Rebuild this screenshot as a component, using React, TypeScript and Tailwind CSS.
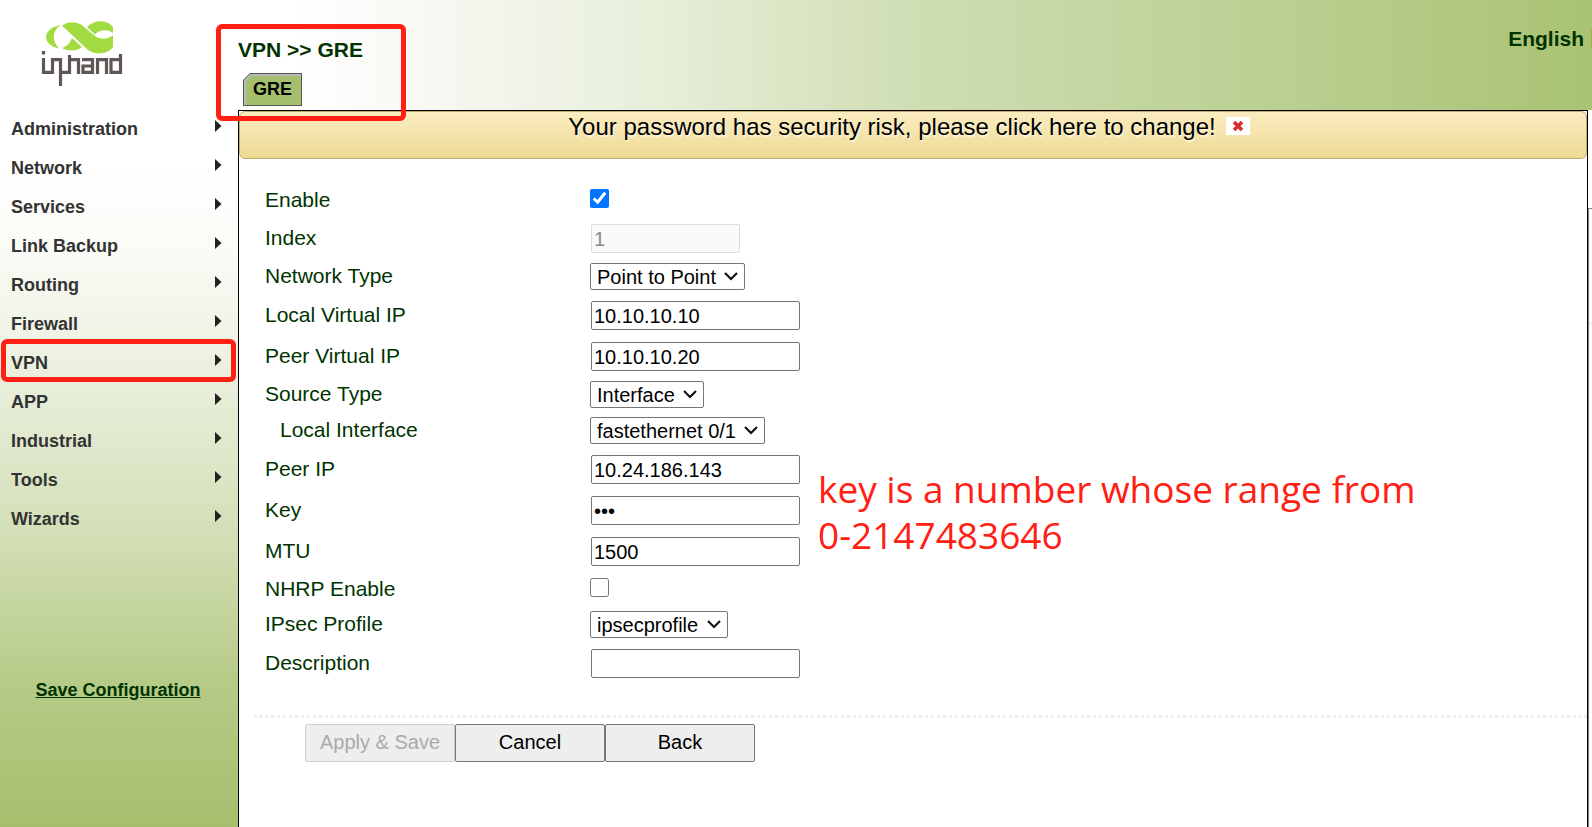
import { useState } from "react";
import type { ReactNode } from "react";

const menuItems = [
  "Administration",
  "Network",
  "Services",
  "Link Backup",
  "Routing",
  "Firewall",
  "VPN",
  "APP",
  "Industrial",
  "Tools",
  "Wizards",
];

const inputClass =
  "mx-px h-[29px] rounded-xs border border-[#767676] bg-white px-0.5 text-[20px] text-black";

const Logo = () => (
  <svg viewBox="0 0 84 68" className="h-[68px] w-[84px]" role="img" aria-label="inhand">
    <g fill="#a2dc40">
      <path d="M20 5 C11 7 6 12 6 17 C6 22 11 27 19 28.5 C12 21 12 12 20 5 Z" />
      <path d="M22 6 C27 1 37 1 43 6 L55 16 C61 20 68 19 73 15.500 L73 27 C67 35 55 35 48 30 L32 15 C29 12 26 9 22 6 Z" />
      <path d="M47 7 C54 0 66 -1 73 7 L73 13 C66 8 58 11 55 14.500 Z" />
      <path d="M32 18 L42 27 C36 32 27 31 22 28 C27 26.500 30 23 32 18 Z" />
    </g>
    <g fill="none" stroke="#5f5655" strokeWidth="3.200">
      <path d="M3.500 38 V52.400 H12" />
      <path d="M3.500 31 V34.500" />
      <path d="M12.500 54 V39.600 H20.500 V66" />
      <path d="M20.500 52.400 H29.500 V35" />
      <path d="M29.500 39.600 H38.500 V54" />
      <path d="M42 39.600 H52.500 V52.400 H43 V46 H52.500" />
      <path d="M57.500 54 V39.600 H66.500 V54" />
      <path d="M80.500 34 V52.400 H71 V39.600 H80.500" />
    </g>
  </svg>
);

const Arrow = () => (
  <svg viewBox="0 0 7 12" className="mb-2 h-3 w-[7px]" aria-hidden="true">
    <path d="M0 0 L6.500 6 L0 12 Z" fill="#222" />
  </svg>
);

type RowProps = {
  label: string;
  id: string;
  indent?: boolean;
  children: ReactNode;
};

const Row = ({ label, id, indent, children }: RowProps) => (
  <div className="flex min-h-[35px] items-center">
    <label htmlFor={id} className={indent ? "w-[325px] shrink-0 pb-0.5 pl-[15px]" : "w-[325px] shrink-0 pb-0.5"}>
      {label}
    </label>
    {children}
  </div>
);

type TextRowProps = {
  label: string;
  id: string;
  value?: string;
  type?: string;
};

const TextRow = ({ label, id, value = "", type = "text" }: TextRowProps) => (
  <Row label={label} id={id}>
    <div className="flex py-1.5">
      <input id={id} type={type} defaultValue={value} className={`${inputClass} w-[209px]`} />
    </div>
  </Row>
);

type SelectRowProps = {
  label: string;
  id: string;
  option: string;
  width: string;
  indent?: boolean;
};

const SelectRow = ({ label, id, option, width, indent }: SelectRowProps) => (
  <Row label={label} id={id} indent={indent}>
    <div className="flex h-9 items-start pt-1">
      <div className="relative flex">
        <select
          id={id}
          className={`${width} h-[27px] appearance-none rounded-xs border border-[#767676] bg-white pl-1.5 text-[20px] leading-6 text-black`}
        >
          <option>{option}</option>
        </select>
        <svg
          viewBox="0 0 14 9"
          className="pointer-events-none absolute right-[7px] top-[9px] h-[9px] w-[14px]"
          aria-hidden="true"
        >
          <path d="M1 1 L7 7 L13 1" fill="none" stroke="#111" strokeWidth="2.200" />
        </svg>
      </div>
    </div>
  </Row>
);

const Sidebar = () => (
  <aside className="flex w-[238px] shrink-0 flex-col bg-[linear-gradient(to_bottom,#fff_20%,#fbfcf8_29%,#f0f4e6_40%,#e2ead0_52%,#d2dfb5_65%,#b7cb88_82%,#a5bf6d)]">
    <div className="pl-10 pt-5">
      <Logo />
    </div>
    <nav className="mt-[22px]">
      {menuItems.map((item) => (
        <a
          key={item}
          href="#"
          className="relative flex h-[39px] items-center justify-between pl-[11px] pr-4 text-[18px] font-bold text-[#333]"
        >
          {item}
          <Arrow />
          {item === "VPN" && (
            <span className="absolute -top-[5px] bottom-px left-px right-[2px] rounded-md border-[5px] border-[#ff2013]" />
          )}
        </a>
      ))}
    </nav>
    <a href="#" className="mt-[138px] pr-0.5 text-center text-[18px] font-bold text-[#003300] underline">
      Save Configuration
    </a>
  </aside>
);

const Header = () => (
  <header className="flex h-[110px] items-start justify-between overflow-hidden bg-[linear-gradient(to_right,#fff_4%,#f8f9f4_13%,#e8efdb_30%,#cfdeb3_50%,#c1d39b_69%,#a9c374)]">
    <div className="pt-9">
      <h1 className="text-[21px] font-bold leading-7 text-[#003300]">VPN &gt;&gt; GRE</h1>
      <button
        type="button"
        className="ml-[5px] mt-[9px] block h-[33px] w-[59px] bg-[#555] pb-px pl-px pr-px pt-px [clip-path:polygon(7px_0,100%_0,100%_100%,0_100%,0_7px)]"
      >
        <span className="block h-full bg-[#b9b9b9] pl-0.5 pt-0.5 [clip-path:polygon(6px_0,100%_0,100%_100%,0_100%,0_6px)]">
          <span className="block h-full bg-[#a5c06c] pr-0.5 text-[18px] font-bold leading-[26px] text-black [clip-path:polygon(5px_0,100%_0,100%_100%,0_100%,0_5px)]">
            GRE
          </span>
        </span>
      </button>
    </div>
    <div className="flex shrink-0 items-center gap-[7px] pt-[25px] text-[21px] font-bold leading-7 text-[#003300]">
      <a href="#">English</a>
      <span className="h-5 w-px bg-[#a3ad3c]" />
    </div>
  </header>
);

const App = () => {
  const [showNotice, setShowNotice] = useState(true);

  return (
    <div className="flex min-h-screen bg-white font-['Liberation_Sans',Arial,sans-serif]">
      <Sidebar />
      <main className="relative flex min-w-0 grow flex-col">
        <Header />
        <div className="flex grow">
          <div className="min-w-0 grow border border-b-0 border-black">
            {showNotice && (
              <div className="flex h-12 items-start justify-center gap-2.5 rounded-md border border-[#c0aa6a] bg-linear-to-b from-[#fbecc0] to-[#eedb94] pr-2 text-[24px] leading-[30px] text-black">
                <a href="#" className="text-shadow-[1px_2px_1px_#fbf5dc]">
                  Your password has security risk, please click here to change!
                </a>
                <button
                  type="button"
                  aria-label="Close"
                  onClick={() => setShowNotice(false)}
                  className="mt-[5px] flex h-[18px] w-6 items-center justify-center bg-white"
                >
                  <svg viewBox="0 0 12 12" className="size-3" aria-hidden="true">
                    <path d="M2 2 L10 10 M10 2 L2 10" stroke="#dd2a2a" strokeWidth="3.500" />
                  </svg>
                </button>
              </div>
            )}

            <form className="pt-6">
              <div className="relative pl-[26px] text-[21px] text-[#003300]">
                <Row label="Enable" id="enable">
                  <input id="enable" type="checkbox" defaultChecked className="mb-1 size-[19px]" />
                </Row>
                <Row label="Index" id="index">
                  <div className="flex py-1.5">
                    <input
                      id="index"
                      type="text"
                      defaultValue="1"
                      disabled
                      className="mx-px h-[29px] w-[149px] rounded-xs border border-[#dcdcdc] bg-[#fafafa] px-0.5 text-[20px] text-[#8a8a8a]"
                    />
                  </div>
                </Row>
                <SelectRow label="Network Type" id="network-type" option="Point to Point" width="w-[155px]" />
                <TextRow label="Local Virtual IP" id="local-virtual-ip" value="10.10.10.10" />
                <TextRow label="Peer Virtual IP" id="peer-virtual-ip" value="10.10.10.20" />
                <SelectRow label="Source Type" id="source-type" option="Interface" width="w-[114px]" />
                <SelectRow
                  label="Local Interface"
                  id="local-interface"
                  option="fastethernet 0/1"
                  width="w-[175px]"
                  indent
                />
                <TextRow label="Peer IP" id="peer-ip" value="10.24.186.143" />
                <TextRow label="Key" id="key" type="password" value="123" />
                <TextRow label="MTU" id="mtu" value="1500" />
                <Row label="NHRP Enable" id="nhrp-enable">
                  <input id="nhrp-enable" type="checkbox" className="mb-1 size-[19px]" />
                </Row>
                <SelectRow label="IPsec Profile" id="ipsec-profile" option="ipsecprofile" width="w-[138px]" />
                <TextRow label="Description" id="description" />

                {/* note beside the key field */}
                <p className="absolute left-[579px] top-[283px] w-[620px] font-['Open_Sans','Noto_Sans',sans-serif] text-[37px] leading-[46px] text-[#ff2013]">
                  key is a number whose range from 0-2147483646
                </p>
              </div>

              <div className="ml-[15px] mt-[31px] border-t-[3px] border-dotted border-[#eee] pl-[51px] pt-1.5">
                <div className="flex text-[20px] text-black">
                  <button
                    type="button"
                    disabled
                    className="h-[38px] w-[150px] rounded-xs border border-[#cfcfcf] bg-[#eee] pb-0.5 text-[#aaa]"
                  >
                    Apply &amp; Save
                  </button>
                  <button
                    type="button"
                    className="h-[38px] w-[150px] rounded-xs border border-[#767676] bg-[#eee] pb-0.5"
                  >
                    Cancel
                  </button>
                  <button
                    type="button"
                    className="h-[38px] w-[150px] rounded-xs border border-[#767676] bg-[#eee] pb-0.5"
                  >
                    Back
                  </button>
                </div>
              </div>
            </form>
          </div>

          {/* edge of the status panel on the right */}
          <div className="mt-[98px] w-1 shrink-0 border-l border-t border-[#808080] pt-[113px]">
            <div className="h-[3px] bg-[#eee]" />
          </div>
        </div>

        {/* highlight around the page title and tab */}
        <span className="pointer-events-none absolute -left-[22px] top-6 h-[97px] w-[190px] rounded-md border-[5px] border-[#ff2013]" />
      </main>
    </div>
  );
};

export default App;
